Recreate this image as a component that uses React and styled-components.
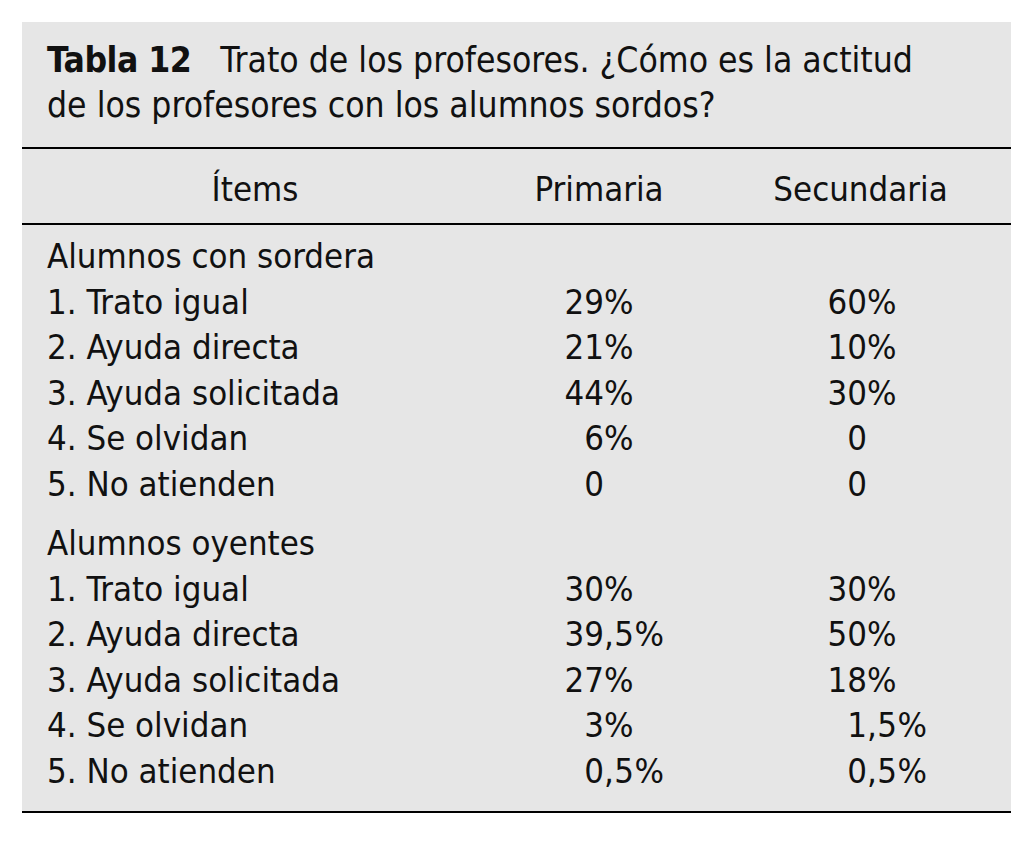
import React from "react";
import styled, { createGlobalStyle } from "styled-components";

const GlobalStyle = createGlobalStyle`
  body {
    margin: 0;
    background: #ffffff;
  }
`;

const Page = styled.div`
  padding: 22px 0 0 22px;
`;

const Table = styled.div`
  width: 989px;
  background: #e6e6e6;
  border-bottom: 2px solid #000;
  font-family: "DejaVu Sans Condensed", "DejaVu Sans", sans-serif;
  font-size: 34.5px;
  color: #111;
`;

const Caption = styled.div`
  box-sizing: border-box;
  height: 127px;
  padding: 15px 25px 0;
  font-size: 35.2px;
  line-height: 45px;
  border-bottom: 2px solid #000;
`;

const CaptionLabel = styled.span`
  font-weight: bold;
  letter-spacing: -0.5px;
  margin-right: 29px;
`;

const Grid = styled.div`
  display: grid;
  grid-template-columns: 466px 222px 1fr;
`;

const HeadRow = styled(Grid)`
  box-sizing: border-box;
  height: 76px;
  padding-top: 6px;
  line-height: 68px;
  border-bottom: 2px solid #000;
`;

const HeadCell = styled.div`
  text-align: center;
`;

const Body = styled.div`
  padding: 9px 0 17px;
`;

const Group = styled.div`
  & + & {
    margin-top: 14px;
  }
`;

const GroupTitle = styled.div`
  padding-left: 25px;
  line-height: 45.5px;
`;

const Row = styled(Grid)`
  line-height: 45.5px;
`;

const Label = styled.div`
  padding-left: 25px;
`;

const Value = styled.div`
  display: grid;
  grid-template-columns: ${(p) => p.$dec}px auto;
`;

const IntPart = styled.span`
  text-align: right;
`;

const Rest = styled.span`
  text-align: left;
  letter-spacing: 0.5px;
`;

const groups = [
  {
    title: "Alumnos con sordera",
    rows: [
      ["1. Trato igual", "29%", "60%"],
      ["2. Ayuda directa", "21%", "10%"],
      ["3. Ayuda solicitada", "44%", "30%"],
      ["4. Se olvidan", "6%", "0"],
      ["5. No atienden", "0", "0"],
    ],
  },
  {
    title: "Alumnos oyentes",
    rows: [
      ["1. Trato igual", "30%", "30%"],
      ["2. Ayuda directa", "39,5%", "50%"],
      ["3. Ayuda solicitada", "27%", "18%"],
      ["4. Se olvidan", "3%", "1,5%"],
      ["5. No atienden", "0,5%", "0,5%"],
    ],
  },
];

// numbers line up on the units digit, like the printed table
const Num = ({ value, dec }) => {
  const int = value.match(/^\d+/)[0];
  return (
    <Value $dec={dec}>
      <IntPart>{int}</IntPart>
      <Rest>{value.slice(int.length)}</Rest>
    </Value>
  );
};

export default function App() {
  return (
    <Page>
      <GlobalStyle />
      <Table>
        <Caption>
          <CaptionLabel>Tabla 12</CaptionLabel>
          Trato de los profesores. ¿Cómo es la actitud
          <br />
          de los profesores con los alumnos sordos?
        </Caption>
        <HeadRow>
          <HeadCell>Ítems</HeadCell>
          <HeadCell>Primaria</HeadCell>
          <HeadCell>Secundaria</HeadCell>
        </HeadRow>
        <Body>
          {groups.map((g) => (
            <Group key={g.title}>
              <GroupTitle>{g.title}</GroupTitle>
              {g.rows.map(([label, prim, sec]) => (
                <Row key={label}>
                  <Label>{label}</Label>
                  <Num value={prim} dec={116} />
                  <Num value={sec} dec={157} />
                </Row>
              ))}
            </Group>
          ))}
        </Body>
      </Table>
    </Page>
  );
}
